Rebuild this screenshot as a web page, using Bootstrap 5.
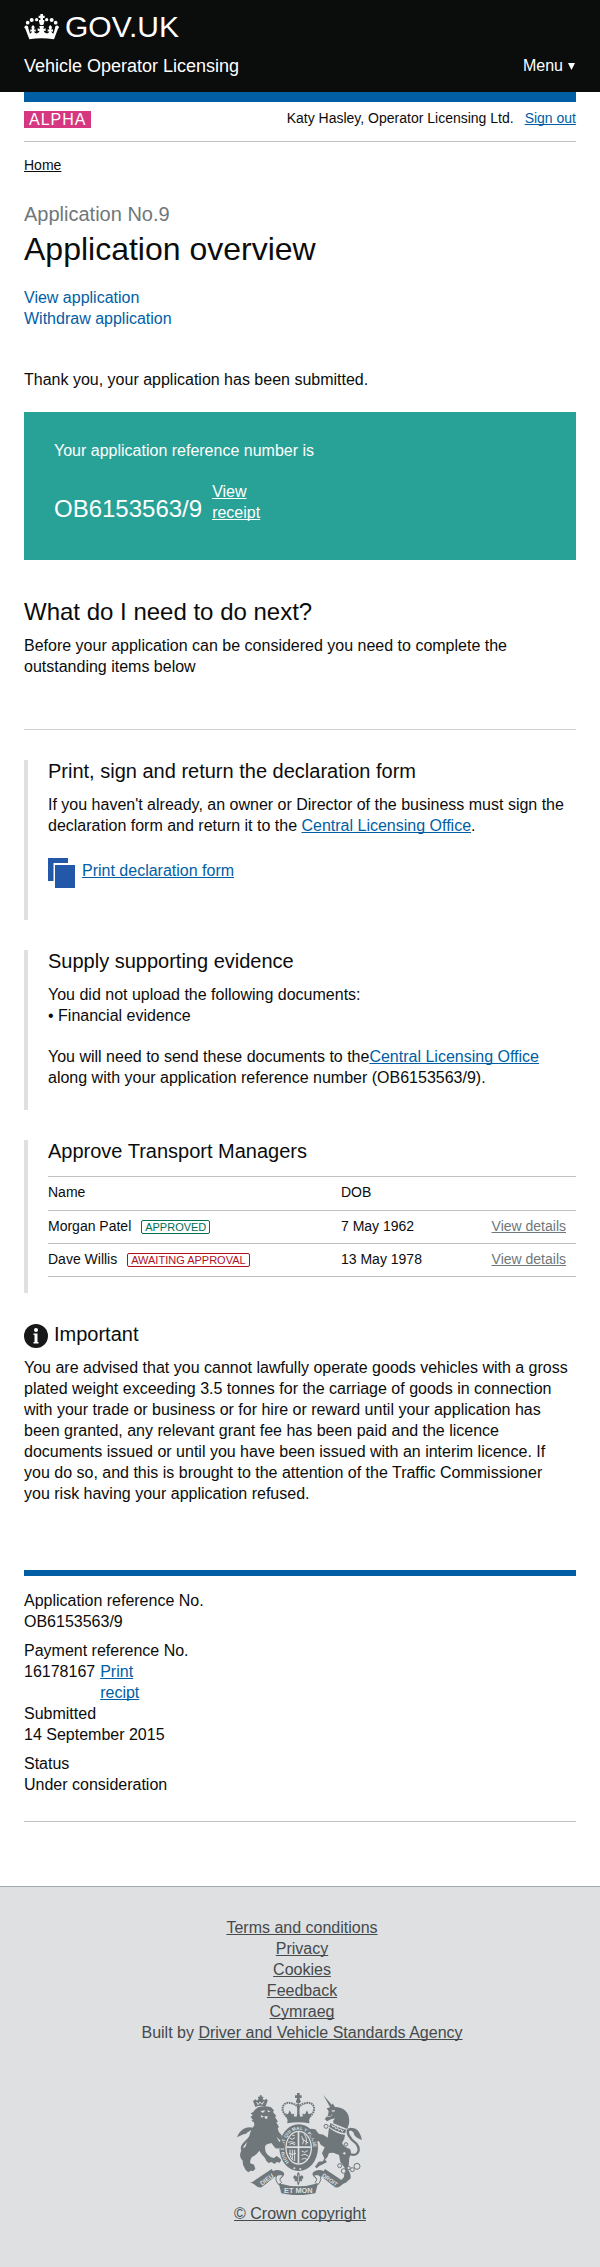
<!DOCTYPE html>
<html lang="en">
<head>
<meta charset="utf-8">
<meta name="viewport" content="width=device-width, initial-scale=1">
<title>Application overview - Vehicle Operator Licensing - GOV.UK</title>
<link href="https://cdn.jsdelivr.net/npm/bootstrap@5.3.0/dist/css/bootstrap.min.css" rel="stylesheet">
<style>
  body { font-family: "Liberation Sans", Arial, Helvetica, sans-serif; font-size: 16px; line-height: 21px; color: #0b0c0c; background: #fff; }
  a { color: #005ea5; text-decoration-skip-ink: none; }
  .page-width { padding: 0 24px; }
  h1, h2, h3, p, ul, dl, dd, dt { margin: 0; font-weight: 400; }
  .site-header { background: #0b0c0c; color: #fff; padding: 12px 0 14px; }
  .site-header a { color: #fff; text-decoration: none; }
  .logo { gap: 6px; font-size: 30px; line-height: 30px; }
  .service-row { margin-top: 12px; line-height: 24px; }
  .service-name { font-size: 18px; }
  .menu-button { background: none; border: 0; padding: 0; color: #fff; gap: 4px; }
  .top-bar { height: 10px; background: #005ea5; }
  .phase-row { padding: 9px 0 13px; border-bottom: 1px solid #bfc1c3; }
  .phase-tag { background: #d53880; color: #fff; padding: 0 5px; line-height: 17px; letter-spacing: 1px; }
  .user-info { font-size: 14px; line-height: 14px; gap: 11px; }
  .crumb { margin-top: 14px; font-size: 14px; line-height: 18px; }
  .crumb a { color: #0b0c0c; }
  .caption-text { margin-top: 28px; font-size: 20px; line-height: 24px; color: #6f777b; }
  h1 { margin-top: 5px; font-size: 32px; line-height: 36px; }
  .page-actions { margin-top: 20px; }
  .page-actions a { text-decoration: none; }
  .thanks { margin-top: 40px; }
  .confirmation { margin-top: 22px; padding: 28px 30px 37px; background: #28a197; color: #fff; }
  .confirmation a { color: #fff; width: 60px; }
  .reference { margin-top: 20px; gap: 10px; }
  .reference-number { font-size: 24px; line-height: 28px; }
  h2 { margin: 37px 0 8px; font-size: 24px; line-height: 30px; }
  .rule { margin: 52px 0 30px; border-top: 1px solid #cfd2d3; }
  .panel { border-left: 4px solid #dee0e2; padding-left: 20px; margin-bottom: 30px; }
  .panel-print { padding-bottom: 32px; }
  .panel-evidence { padding-bottom: 22px; }
  .panel-managers { padding-bottom: 16px; }
  h3 { font-size: 20px; line-height: 22px; margin-bottom: 12px; }
  .print-link { margin-top: 22px; gap: 7px; }
  .print-link a { padding-top: 2px; }
  .managers { width: 100%; margin-top: 14px; font-size: 14px; line-height: 20px; border-top: 1px solid #bfc1c3; }
  .managers th, .managers td { font-weight: 400; padding: 5px 10px 7px 0; border-bottom: 1px solid #bfc1c3; vertical-align: top; }
  .managers th { padding-bottom: 8px; }
  .managers th:first-child { width: 293px; }
  .managers a { color: #6f777b; }
  .status-tag { display: inline-block; margin-left: 6px; padding: 0 3px; border: 1px solid; border-radius: 2px; font-size: 11px; line-height: 12px; }
  .status-approved { color: #006e56; }
  .status-awaiting { color: #b10e1e; }
  .important { gap: 6px; margin-bottom: 9px; }
  .important h3 { margin: 0; }
  .advice { padding-right: 6px; }
  .details { margin-top: 66px; padding: 14px 0 26px; border-top: 6px solid #005ea5; border-bottom: 1px solid #bfc1c3; }
  .detail-gap { margin-top: 8px; }
  .payment { gap: 5px; }
  .payment a { width: 50px; }
  .site-footer { margin-top: 64px; padding: 30px 0 43px; background: #dee0e2; border-top: 1px solid #a1acb2; color: #454a4c; text-align: center; }
  .site-footer a { color: #454a4c; }
  .footer-links { padding-left: 4px; }
  .arms { display: block; margin: 50px auto 8px; }
</style>
</head>
<body>
<header class="site-header">
  <div class="container-fluid page-width">
    <a href="#" class="logo d-flex">
      <svg width="35" height="30" viewBox="72 30 105 90" fill="#fff" aria-hidden="true">
        <path d="M121 36h8v5h5v7h-5v6h4v7h-16v-7h4v-6h-5v-7h5z"/>
        <circle cx="125" cy="63" r="7"/>
        <circle cx="110" cy="53" r="5"/><circle cx="95" cy="54" r="6"/><circle cx="83" cy="62" r="5.500"/><circle cx="79" cy="76" r="5.500"/>
        <circle cx="140" cy="53" r="5"/><circle cx="155" cy="54" r="6"/><circle cx="167" cy="62" r="5.500"/><circle cx="171" cy="76" r="5.500"/>
        <path d="M76 80l8-4 6 19q5-2 6-7l-5 1v-7l5 1-2-8 5-6 5 6-2 8 5-1v7l-5-1q1 7 9 6 6-1 8-8l-6 1v-8l7 2-2-9h14l-2 9 7-2v8l-6-1q2 7 8 8 8 1 9-6l-5 1v-7l5 1-2-8 5-6 5 6-2 8 5-1v7l-5-1q1 5 6 7l6-19 8 4-12 32q-38-7-74 0z"/>
      </svg>
      <span>GOV.UK</span>
    </a>
    <div class="d-flex justify-content-between service-row">
      <a href="#" class="service-name">Vehicle Operator Licensing</a>
      <button type="button" class="menu-button d-flex align-items-center">Menu
        <svg width="9" height="9" viewBox="0 0 9 9" fill="#fff" aria-hidden="true"><path d="M1 1h7L4.500 8z"/></svg>
      </button>
    </div>
  </div>
</header>

<main class="container-fluid page-width">
  <div class="top-bar"></div>
  <div class="phase-row d-flex justify-content-between align-items-start">
    <span class="phase-tag">ALPHA</span>
    <div class="user-info d-flex"><span>Katy Hasley, Operator Licensing Ltd.</span><a href="#">Sign out</a></div>
  </div>
  <nav class="crumb" aria-label="Breadcrumb"><a href="#">Home</a></nav>

  <p class="caption-text">Application No.9</p>
  <h1>Application overview</h1>
  <ul class="page-actions list-unstyled mb-0">
    <li><a href="#">View application</a></li>
    <li><a href="#">Withdraw application</a></li>
  </ul>
  <p class="thanks">Thank you, your application has been submitted.</p>

  <section class="confirmation">
    <p>Your application reference number is</p>
    <div class="reference d-flex align-items-end">
      <span class="reference-number">OB6153563/9</span>
      <a href="#">View receipt</a>
    </div>
  </section>

  <h2>What do I need to do next?</h2>
  <p>Before your application can be considered you need to complete the outstanding items below</p>
  <div class="rule"></div>

  <section class="panel panel-print">
    <h3>Print, sign and return the declaration form</h3>
    <p>If you haven't already, an owner or Director of the business must sign the declaration form and return it to the <a href="#">Central Licensing Office</a>.</p>
    <div class="print-link d-flex align-items-start">
      <svg width="27" height="30" viewBox="0 0 27 30" fill="#2358a8" aria-hidden="true"><path d="M0 0h20v5H5.500V23H0z"/><path d="M7 7h20v23H7z"/></svg>
      <a href="#">Print declaration form</a>
    </div>
  </section>

  <section class="panel panel-evidence">
    <h3>Supply supporting evidence</h3>
    <p>You did not upload the following documents:</p>
    <ul class="list-unstyled mb-0"><li>• Financial evidence</li></ul>
    <p class="mt-3 pt-1">You will need to send these documents to the<a href="#">Central Licensing Office</a> along with your application reference number (OB6153563/9).</p>
  </section>

  <section class="panel panel-managers">
    <h3>Approve Transport Managers</h3>
    <table class="managers">
      <thead><tr><th scope="col">Name</th><th scope="col">DOB</th><th></th></tr></thead>
      <tbody>
        <tr><td>Morgan Patel <span class="status-tag status-approved">APPROVED</span></td><td>7 May 1962</td><td class="text-end"><a href="#">View details</a></td></tr>
        <tr><td>Dave Willis <span class="status-tag status-awaiting">AWAITING APPROVAL</span></td><td>13 May 1978</td><td class="text-end"><a href="#">View details</a></td></tr>
      </tbody>
    </table>
  </section>

  <section>
    <div class="important d-flex align-items-start">
      <svg width="24" height="25" viewBox="0 0 24 25" aria-hidden="true"><circle cx="12" cy="13" r="12" fill="#171819"/><circle cx="12" cy="7" r="2" fill="#fff"/><path d="M9.500 10.500h4V19h1v1.500h-5V19h1v-7h-1z" fill="#fff"/></svg>
      <h3>Important</h3>
    </div>
    <p class="advice">You are advised that you cannot lawfully operate goods vehicles with a gross plated weight exceeding 3.5 tonnes for the carriage of goods in connection with your trade or business or for hire or reward until your application has been granted, any relevant grant fee has been paid and the licence documents issued or until you have been issued with an interim licence. If you do so, and this is brought to the attention of the Traffic Commissioner you risk having your application refused.</p>
  </section>

  <dl class="details">
    <dt>Application reference No.</dt>
    <dd>OB6153563/9</dd>
    <dt class="detail-gap">Payment reference No.</dt>
    <dd class="payment d-flex"><span>16178167</span><a href="#">Print recipt</a></dd>
    <dt>Submitted</dt>
    <dd>14 September 2015</dd>
    <dt class="detail-gap">Status</dt>
    <dd>Under consideration</dd>
  </dl>
</main>

<footer class="site-footer">
  <ul class="footer-links list-unstyled mb-0">
    <li><a href="#">Terms and conditions</a></li>
    <li><a href="#">Privacy</a></li>
    <li><a href="#">Cookies</a></li>
    <li><a href="#">Feedback</a></li>
    <li><a href="#">Cymraeg</a></li>
    <li>Built by <a href="#">Driver and Vehicle Standards Agency</a></li>
  </ul>
  <svg class="arms" width="126" height="102" viewBox="53 39 378 306" fill="#6f777b" aria-hidden="true">
    <!-- central crown -->
    <path d="M233 39h8v7h6v8h-6v7h-8v-7h-6v-8h6z"/>
    <circle cx="237" cy="64" r="7"/>
    <g fill="none" stroke="#6f777b">
      <path d="M202 110C176 84 196 62 217 70q14 3 20 14q6-11 20-14c21-8 41 14 15 40" stroke-width="6" stroke-dasharray="5 2"/>
      <path d="M237 72v36" stroke-width="7"/>
    </g>
    <path d="M202 114l-5-14 9 3 5-12 6 12 8-2-2 8 8 1 6-15 6 15 8-1-2-8 8 2 6-12 5 12 9-3-5 14-4 9h-62z"/>
    <path d="M204 122q33-7 66 0v8q-33-7-66 0z"/>
    <!-- garter and shield -->
    <ellipse cx="238" cy="203" rx="58" ry="70"/>
    <ellipse cx="238" cy="203" rx="40" ry="51" fill="#dee0e2"/>
    <ellipse cx="238" cy="203" rx="36" ry="47"/>
    <path d="M235 156h5v94h-5zM202 199h72v5h-72z" fill="#dee0e2"/>
    <g fill="none" stroke="#dee0e2" stroke-width="3">
      <path d="M211 174l8 4 8-5m-20 14l9-2 12 4M218 165l8 2M211 193l7-3 9 4"/>
      <path d="M247 169q9 12 3 24m5-30q9 10 5 31m-12-17l19 12"/>
      <path d="M212 209v13q0 13 10 19M219 209v29M226 209v34M209 220q8 6 21 0"/>
      <path d="M247 213l9 4 9-5m-19 14l11-3 10 5m-20 10l9-3 7 3"/>
    </g>
    <path id="garter" d="M212 249A44 55 0 1 1 264 249" fill="none"/>
    <text fill="#dee0e2" font-size="14" font-weight="700" font-family="Liberation Sans, sans-serif"><textPath href="#garter" startOffset="4">HONI SOIT QUI MAL Y PENSE</textPath></text>
    <circle cx="225" cy="265" r="3" fill="#dee0e2"/><circle cx="243" cy="267" r="3" fill="#dee0e2"/>
    <!-- lion -->
    <path d="M108 58l6 4 4-8h-2v-4h5v-4h6v4h5v4h-3l5 7 7-5 4 6-7 18q-15-6-30 1l-7-18z"/>
    <path d="M112 66l4 8 6-8 6 7 6-9" stroke="#dee0e2" stroke-width="3" fill="none"/>
    <path d="M106 90l10-8q20-7 39 0l9 9-3 5 10 12-4 3 9 14-5 2 8 15-4 2 3 11 9 11v16q9 9 8 19-6 8-12 0-7 8-16 2l-11-14-13 4q-7 4-6 11 0 13 8 20l10 8 9 2 8-6q8 5 14 12l-5 8-9-2-6 6-10-6-8 3q-7-3-11-15-11-11-17-22-11 15-22 19-8 10-5 19l11 4 4 12-6 7-8-1-7 5-8-7-8-16-1-12q-8-7-8-17 2-18 16-24l11-30q5-22 16-35l-1-9-8-5 5-3-7-7 6-7-6-5 8-4z"/>
    <path d="M124 93l13-2-3 6-6 1zM143 91l11 3-7 3zM136 108l9 1-2 9-7-4zM124 105l10 5-8 3zM171 170l13 12-4 4z" fill="#dee0e2"/>
    <path d="M95 216c-28 7-35-12-17-29 17-16 30-31 23-39q-9-4-17 6" fill="none" stroke="#6f777b" stroke-width="7"/>
    <path d="M53 172q7-21 27-29 20-3 24 4-17 0-21 13-13 3-30 12z"/>
    <!-- unicorn -->
    <path d="M312 45l31 36-8 5z"/>
    <path d="M322 85l13-4 5-11 7 11q19 0 31 11 14 12 11 39l-5 16-42-17q-2-8 5-15l-12 3-12 6-7-7 10-11 2-12z"/>
    <path d="M338 91l9 1-7 4zM323 110l10-1 6-5" stroke="#dee0e2" stroke-width="2" fill="none"/>
    <path d="M334 129q23 16 47 20l-4 11q-25-4-48-20z"/>
    <path d="M337 134l4 7 5-3 3 8 6-3 3 8 6-4 5 8 4-6" stroke="#dee0e2" stroke-width="3" fill="none"/>
    <circle cx="320" cy="139" r="6" fill="#dee0e2" stroke="#6f777b" stroke-width="3"/>
    <path d="M329 143q26 20 48 21 0 14-9 25 7 13 24 18 7 13-2 26l-3 37q10 14 6 26l-14 12q-10 0-15-6l10-11 2-28-13-17-4-21-17-7-13 1q-3 14-12 20l6 7-11 6q-12 4-20 13l-5-5 11-15 13-1 4-9-7-15 8-18-12-8-5-10-14 2-5-8 8-3-12-2-4-10 8 1-13-13 8-5 13 2 10 13 14 3 13 9z"/>
    <path d="M383 218c32 18 44-7 27-28-22-16-29-34-22-41q9-6 18 4" fill="none" stroke="#6f777b" stroke-width="7"/>
    <path d="M385 153q5-14 24-7 14 9 19 34-25-9-25-22-7-10-18-5z"/>
    <g fill="#dee0e2" stroke="#6f777b" stroke-width="3"><circle cx="380" cy="193" r="5"/><circle cx="375" cy="220" r="5"/><circle cx="361" cy="257" r="6"/><circle cx="373" cy="273" r="7"/><circle cx="388" cy="264" r="5"/><circle cx="399" cy="269" r="6"/><circle cx="413" cy="259" r="9"/></g>
    <!-- motto ribbon -->
    <path d="M92 306q35 2 56-25 23-19 43-6 10 10-7 21l-7-7-15 1q-27 32-48 28zM382 306q-35 2-56-25-23-19-43-6-10 10 7 21l7-7 15 1q27 32 48 28z"/>
    <path d="M100 305l57-38 12 21-42 34q-16 3-27-17zM374 305l-57-38-12 21 42 34q16 3 27-17z"/>
    <path d="M174 285q20-3 15 4-13 9-2 18l-8 8q-16-18-5-30zM300 285q-20-3-15 4 13 9 2 18l8 8q16-18 5-30z" fill="#dee0e2" stroke="#6f777b" stroke-width="3"/>
    <path d="M178 310q58 18 118 0l-8 30q-52 11-102 0z"/>
    <path d="M233 281l4-5 4 5v9q7-9 11 0 0 8-9 10h5v4h-7l-2 10h-4l-2-10h-7v-4h5q-9-2-9-10 4-9 11 0z"/>
    <path d="M237 284v23" stroke="#dee0e2" stroke-width="2"/>
    <g fill="#dee0e2" font-weight="700" font-family="Liberation Sans, sans-serif" text-anchor="middle">
      <text x="237" y="339" font-size="22">ET MON</text>
      <text transform="translate(146 304) rotate(-36)" font-size="19">DIEU</text>
      <text transform="translate(328 304) rotate(36)" font-size="17">DROIT</text>
    </g>
  </svg>
  <a href="#">© Crown copyright</a>
</footer>
<script src="https://cdn.jsdelivr.net/npm/bootstrap@5.3.0/dist/js/bootstrap.bundle.min.js"></script>
</body>
</html>
